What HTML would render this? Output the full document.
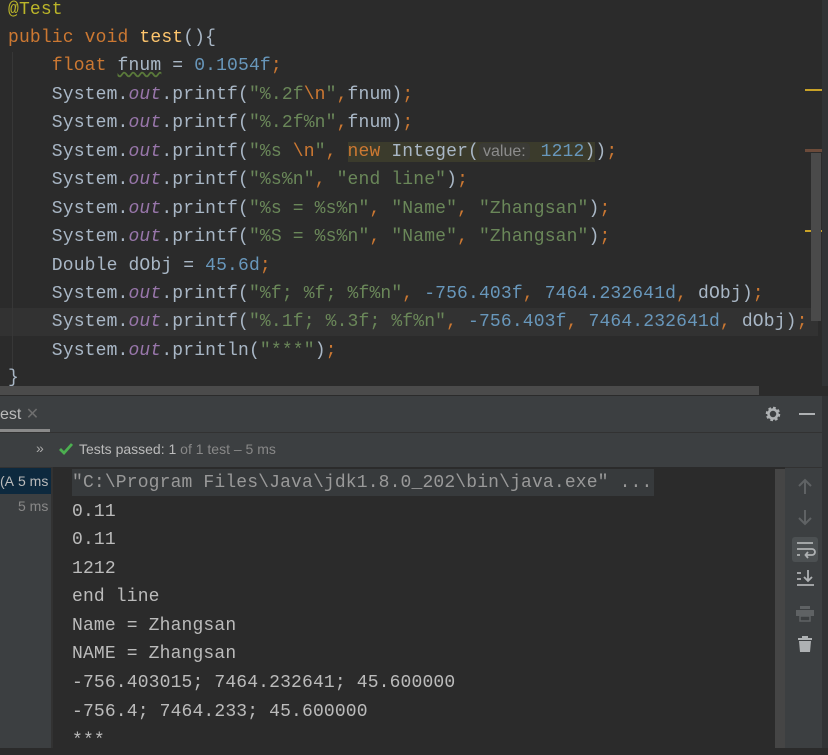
<!DOCTYPE html>
<html><head><meta charset="utf-8"><style>
*{margin:0;padding:0;box-sizing:border-box}
body{width:828px;height:748px;overflow:hidden;background:#2b2b2b;position:relative;font-family:"Liberation Mono",monospace}
.code{position:absolute;left:0;top:0;width:828px;height:386px;background:#2b2b2b}
.ln{position:absolute;left:8px;height:28px;line-height:28px;font-size:18px;letter-spacing:0.15px;color:#a9b7c6;white-space:pre}
.k{color:#cc7832}.s{color:#6a8759}.n{color:#6897bb}.o{color:#9876aa;font-style:italic}.a{color:#bbb529}.m{color:#ffc66d}
.hl{background:#3b3b2c;}
.hint{background:#3b3b36;color:#8c8c8c;font-family:"Liberation Sans",sans-serif;font-size:16px;letter-spacing:0;border-radius:4px;padding:0 4px}
.guide{position:absolute;left:12px;top:52px;width:1px;height:320px;background:#373737}
.cur{position:absolute;left:0;top:308px;width:818px;height:28px;background:#323232}
.pane{position:absolute;left:0;top:396px;width:828px;height:352px;background:#3c3f41}
.sans{font-family:"Liberation Sans",sans-serif}
.con{position:absolute;left:53px;top:467px;width:732px;height:281px;background:#2b2b2b}
.cl{position:absolute;left:72px;height:28px;line-height:28px;font-size:18px;letter-spacing:0.15px;color:#bbbbbb;white-space:pre}
</style></head><body>
<div class="code">
<div class="cur"></div>
<div class="guide"></div>
<div class="ln a" style="top:-4px">@Test</div>
<div class="ln" style="top:24px"><span class="k">public void </span><span class="m">test</span>(){</div>
<div class="ln" style="top:52px">    <span class="k">float </span><span style="text-decoration:underline wavy #5a7a3a">fnum</span> = <span class="n">0.1054f</span><span class="k">;</span></div>
<div class="ln" style="top:81px">    System.<span class="o">out</span>.printf(<span class="s">"%.2f</span><span class="k">\n</span><span class="s">"</span><span class="k">,</span>fnum)<span class="k">;</span></div>
<div class="ln" style="top:109px">    System.<span class="o">out</span>.printf(<span class="s">"%.2f%n"</span><span class="k">,</span>fnum)<span class="k">;</span></div>
<div class="ln" style="top:138px">    System.<span class="o">out</span>.printf(<span class="s">"%s </span><span class="k">\n</span><span class="s">"</span><span class="k">, </span><span class="hl"><span class="k">new </span>Integer(<span class="hint">value:</span> <span class="n">1212</span>)</span>)<span class="k">;</span></div>
<div class="ln" style="top:166px">    System.<span class="o">out</span>.printf(<span class="s">"%s%n"</span><span class="k">, </span><span class="s">"end line"</span>)<span class="k">;</span></div>
<div class="ln" style="top:195px">    System.<span class="o">out</span>.printf(<span class="s">"%s = %s%n"</span><span class="k">, </span><span class="s">"Name"</span><span class="k">, </span><span class="s">"Zhangsan"</span>)<span class="k">;</span></div>
<div class="ln" style="top:223px">    System.<span class="o">out</span>.printf(<span class="s">"%S = %s%n"</span><span class="k">, </span><span class="s">"Name"</span><span class="k">, </span><span class="s">"Zhangsan"</span>)<span class="k">;</span></div>
<div class="ln" style="top:252px">    Double dObj = <span class="n">45.6d</span><span class="k">;</span></div>
<div class="ln" style="top:280px">    System.<span class="o">out</span>.printf(<span class="s">"%f; %f; %f%n"</span><span class="k">, </span><span class="n">-756.403f</span><span class="k">, </span><span class="n">7464.232641d</span><span class="k">, </span>dObj)<span class="k">;</span></div>
<div class="ln" style="top:308px">    System.<span class="o">out</span>.printf(<span class="s">"%.1f; %.3f; %f%n"</span><span class="k">, </span><span class="n">-756.403f</span><span class="k">, </span><span class="n">7464.232641d</span><span class="k">, </span>dObj)<span class="k">;</span></div>
<div class="ln" style="top:337px">    System.<span class="o">out</span>.println(<span class="s">"***"</span>)<span class="k">;</span></div>
<div class="ln" style="top:364px">}</div>
<div style="position:absolute;left:805px;top:89px;width:17px;height:2px;background:#c9a227"></div>
<div style="position:absolute;left:805px;top:149px;width:17px;height:3px;background:#6b4a3a"></div>
<div style="position:absolute;left:805px;top:230px;width:17px;height:2px;background:#c9a227"></div>
<div style="position:absolute;left:811px;top:153px;width:10px;height:168px;background:#4a4a4a"></div>
<div style="position:absolute;left:822px;top:0;width:6px;height:386px;background:#313335"></div>
</div>
<div style="position:absolute;left:0;top:386px;width:828px;height:10px;background:#2b2b2b"></div>
<div style="position:absolute;left:0;top:386px;width:759px;height:9px;background:#4b4b4b"></div>
<div class="pane">
 <div class="sans" style="position:absolute;left:0;top:8px;font-size:16px;color:#bbbbbb">est <span style="color:#6e6e6e">✕</span></div>
 <div style="position:absolute;left:0;top:33px;width:50px;height:3px;background:#8a8a8a"></div>
 <div style="position:absolute;left:0;top:36px;width:822px;height:1px;background:#323232"></div>
 <svg style="position:absolute;left:764px;top:9px" width="18" height="18" viewBox="0 0 18 18"><circle cx="9" cy="9" r="5.5" fill="none" stroke="#aeb1b3" stroke-width="3.5" stroke-dasharray="2.4 1.9"/><circle cx="9" cy="9" r="4.5" fill="none" stroke="#aeb1b3" stroke-width="2.5"/></svg>
 <div style="position:absolute;left:799px;top:17px;width:16px;height:2px;background:#aeb1b3"></div>
 <div class="sans" style="position:absolute;left:36px;top:44px;font-size:14px;color:#aaaaaa">»</div>
 <svg style="position:absolute;left:58px;top:46px" width="16" height="14" viewBox="0 0 16 14"><path d="M2 7 L6 11 L14 2" fill="none" stroke="#4caf50" stroke-width="2.8"/></svg>
 <div class="sans" style="position:absolute;left:79px;top:45px;font-size:14px;color:#bbbbbb">Tests passed: 1 <span style="color:#888">of 1 test – 5 ms</span></div>
 <div style="position:absolute;left:0;top:71px;width:822px;height:1px;background:#323232"></div>
 <div style="position:absolute;left:0;top:72px;width:51px;height:26px;background:#0d293e"></div>
 <div class="sans" style="position:absolute;left:0;top:77px;font-size:14px;color:#bbbbbb">(A<span style="display:inline-block;width:4px"></span>5 ms</div>
 <div class="sans" style="position:absolute;left:18px;top:102px;font-size:14px;color:#888">5 ms</div>
 <div style="position:absolute;left:51px;top:72px;width:2px;height:280px;background:#323232"></div>
 <div style="position:absolute;left:822px;top:0;width:6px;height:352px;background:#313335"></div>
</div>
<div class="con"></div>
<div style="position:absolute;left:72px;top:469px;width:582px;height:27px;background:#373a3c"></div>
<div style="position:absolute;left:775px;top:469px;width:10px;height:279px;background:#454545"></div>
<div class="cl" style="top:469px;color:#999">"C:\Program Files\Java\jdk1.8.0_202\bin\java.exe" ...</div>
<div class="cl" style="top:498px">0.11</div>
<div class="cl" style="top:526px">0.11</div>
<div class="cl" style="top:555px">1212</div>
<div class="cl" style="top:583px">end line</div>
<div class="cl" style="top:612px">Name = Zhangsan</div>
<div class="cl" style="top:640px">NAME = Zhangsan</div>
<div class="cl" style="top:669px">-756.403015; 7464.232641; 45.600000</div>
<div class="cl" style="top:698px">-756.4; 7464.233; 45.600000</div>
<div class="cl" style="top:727px">***</div>
<svg style="position:absolute;left:788px;top:470px" width="34" height="200" viewBox="0 0 34 200">
 <path d="M17 24 V10 M11 16 L17 10 L23 16" fill="none" stroke="#5f6264" stroke-width="2"/>
 <path d="M17 40 V54 M11 48 L17 54 L23 48" fill="none" stroke="#5f6264" stroke-width="2"/>
 <rect x="4" y="67" width="26" height="25" rx="3" fill="#4c5052"/>
 <path d="M9 73 H25 M9 79 H24 a3 3 0 0 1 0 6 H18 M20 82 L17.5 85 L20 88 M9 85 H12" fill="none" stroke="#aeb1b3" stroke-width="1.8"/>
 <path d="M9 103 H13 M9 109 H13 M9 115 H26 M20 100 V111 M16 107 L20 111 L24 107" fill="none" stroke="#aeb1b3" stroke-width="1.8"/>
 <rect x="12" y="136" width="10" height="3" fill="#5f6264"/><rect x="8" y="140" width="18" height="6" fill="#5f6264"/><rect x="12" y="146" width="10" height="5" fill="none" stroke="#5f6264" stroke-width="1.5"/>
 <rect x="10" y="168" width="14" height="2" fill="#aeb1b3"/><rect x="14" y="166" width="6" height="2" fill="#aeb1b3"/><path d="M11 171 H23 L22 182 H12 Z" fill="#aeb1b3"/>
</svg>
</body></html>
